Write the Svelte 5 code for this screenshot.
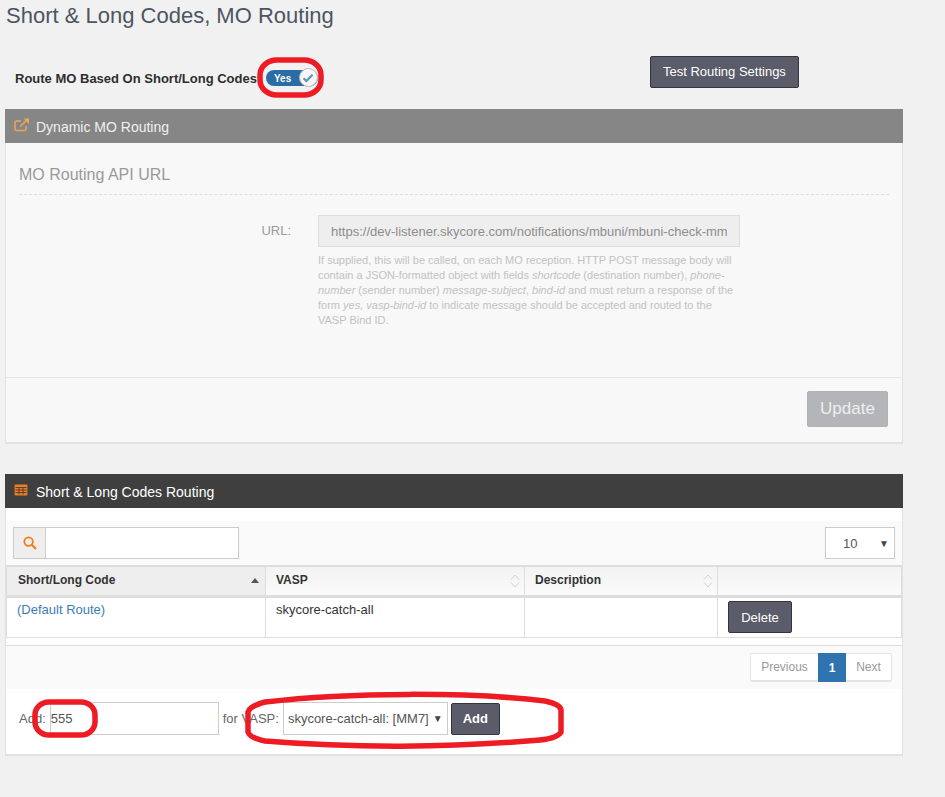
<script>
	const columns = [
		{ label: 'Short/Long Code', sort: 'asc' },
		{ label: 'VASP', sort: 'both' },
		{ label: 'Description', sort: 'both' },
		{ label: '', sort: null }
	];
</script>

<div class="page">
	<h1 class="title">Short &amp; Long Codes, MO Routing</h1>

	<div class="route-row">
		<span class="route-label">Route MO Based On Short/Long Codes</span>
		<span class="toggle">
			<span class="toggle-text">Yes</span>
			<span class="knob">
				<svg width="12" height="10" viewBox="0 0 12 10">
					<path d="M1.5 5.2 4.4 8 10.5 1.8" fill="none" stroke="#5a93b8" stroke-width="2.2" />
				</svg>
			</span>
		</span>
		<button class="btn test" type="button">Test Routing Settings</button>
	</div>

	<section class="panel dim">
		<header class="panel-head grey">
			<svg class="head-icon" width="16" height="14" viewBox="0 0 16 14">
				<path d="M12 8v3a1.6 1.6 0 0 1-1.600 1.600H2.600A1.600 1.600 0 0 1 1 11V4.600A1.600 1.600 0 0 1 2.600 3H7" fill="none" stroke="#f0a655" stroke-width="1.500" />
				<path d="M6 8.500 13 2" fill="none" stroke="#f0a655" stroke-width="1.700" />
				<path d="M9.500 0.500H15V6z" fill="#f0a655" />
			</svg>
			<span>Dynamic MO Routing</span>
		</header>
		<div class="dim-body">
			<h2 class="legend">MO Routing API URL</h2>
			<div class="url-row">
				<label class="url-label" for="url">URL:</label>
				<div class="url-field">
					<input id="url" class="url-input" disabled value="https://dev-listener.skycore.com/notifications/mbuni/mbuni-check-mm" />
					<p class="help">
						If supplied, this will be called, on each MO reception. HTTP POST message body will
						contain a JSON-formatted object with fields <i>shortcode</i> (destination number), <i>phone-number</i>
						(sender number) <i>message-subject</i>, <i>bind-id</i> and must return a response of the
						form <i>yes, vasp-bind-id</i> to indicate message should be accepted and routed to the
						VASP Bind ID.
					</p>
				</div>
			</div>
		</div>
		<footer class="dim-foot">
			<button class="update" type="button">Update</button>
		</footer>
	</section>

	<section class="panel routing">
		<header class="panel-head dark">
			<svg class="head-icon" width="14" height="12" viewBox="0 0 14 12">
				<path d="M0.600 1.600Q0.600 0.600 1.600 0.600H12.400Q13.400 0.600 13.400 1.600V10.400Q13.400 11.400 12.400 11.400H1.600Q0.600 11.400 0.600 10.400Z" fill="#f07c1e" />
				<path d="M1.500 3.500H12.500M1.500 6H12.500M1.500 8.500H12.500M5 3.500V10.500M9 3.500V10.500" stroke="#3f3f3f" stroke-width="0.900" fill="none" />
			</svg>
			<span>Short &amp; Long Codes Routing</span>
		</header>

		<div class="toolbar">
			<div class="search">
				<span class="search-icon">
					<svg width="14" height="14" viewBox="0 0 14 14">
						<circle cx="5.600" cy="5.600" r="4.300" fill="none" stroke="#f57c14" stroke-width="1.800" />
						<path d="M8.800 8.800 13 13" stroke="#f57c14" stroke-width="2.200" fill="none" />
					</svg>
				</span>
				<span class="search-input"></span>
			</div>
			<div class="length">
				<span>10</span>
				<span class="caret">▼</span>
			</div>
		</div>

		<table class="codes">
			<thead>
				<tr>
					{#each columns as col}
						<th>
							{col.label}
							{#if col.sort === 'asc'}
								<span class="sort-asc"></span>
							{:else if col.sort === 'both'}
								<svg class="sort-both" width="10" height="16" viewBox="0 0 10 16">
									<path d="M1 6.500 5 2 9 6.500M1 9.500 5 14 9 9.500" fill="none" stroke="#d0d0d0" />
								</svg>
							{/if}
						</th>
					{/each}
				</tr>
			</thead>
			<tbody>
				<tr>
					<td><a href="#default">(Default Route)</a></td>
					<td>skycore-catch-all</td>
					<td></td>
					<td><button class="btn delete" type="button">Delete</button></td>
				</tr>
			</tbody>
		</table>

		<div class="pager-bar">
			<div class="pager">
				<span class="page-link">Previous</span>
				<span class="page-link current">1</span>
				<span class="page-link">Next</span>
			</div>
		</div>

		<div class="add-row">
			<span>Add:</span>
			<span class="add-input">555</span>
			<span class="for-vasp">for VASP:</span>
			<span class="vasp-select">skycore-catch-all: [MM7]<span class="caret small">▼</span></span>
			<button class="btn add" type="button">Add</button>
		</div>
	</section>

	<svg class="marks" width="945" height="797" viewBox="0 0 945 797">
		<rect x="260" y="60" width="61" height="35" rx="17" ry="15" />
		<rect x="35" y="702" width="60" height="33" rx="14" ry="13" />
		<path d="M248 732 248 712Q250 706 265 702C350 692 470 692 545 701Q560 704 561 710L561 732Q558 738 540 740C450 748 350 748 265 741Q250 738 248 732Z" />
	</svg>
</div>

<style>
	:global(body) {
		background: #f1f1f1;
	}

	.page {
		position: relative;
		width: 945px;
		height: 797px;
		padding-left: 5px;
		box-sizing: border-box;
		overflow: hidden;
		font-family: 'Liberation Sans', Arial, sans-serif;
		font-size: 13px;
		color: #333;
	}

	.title {
		margin: 0;
		padding: 1px 0 0 1px;
		font-size: 22px;
		font-weight: 400;
		line-height: 30px;
		color: #4c5561;
	}

	.route-row {
		display: flex;
		align-items: center;
		height: 32px;
		margin-top: 25px;
		padding-left: 10px;
	}

	.route-label {
		font-size: 13px;
		font-weight: 700;
		color: #2e2e2e;
		margin-top: 12px;
	}

	.toggle {
		display: flex;
		align-items: center;
		width: 52px;
		height: 16px;
		margin: 12px 0 0 9px;
		border-radius: 9px;
		background: #2a6da6;
		position: relative;
	}

	.toggle-text {
		margin-left: 8px;
		font-size: 10px;
		font-weight: 700;
		color: #fff;
	}

	.knob {
		position: absolute;
		right: 0;
		top: -2px;
		width: 19px;
		height: 19px;
		display: flex;
		align-items: center;
		justify-content: center;
		border-radius: 50%;
		background: #f8f8f8;
		border: 1px solid #bbb;
		box-sizing: border-box;
	}

	.btn {
		border: 1px solid #32343f;
		border-radius: 2px;
		background: #5a5c69;
		color: #fff;
		font-family: inherit;
		font-size: 13px;
		padding: 0;
	}

	.test {
		width: 149px;
		height: 32px;
		margin-left: 332px;
		padding-bottom: 2px;
	}

	.panel {
		width: 898px;
		border: 1px solid #e2e2e2;
		border-top: 0;
		border-bottom-width: 2px;
		box-sizing: border-box;
	}

	.panel-head {
		display: flex;
		align-items: center;
		gap: 6px;
		height: 34px;
		margin: 0 -1px;
		padding: 1px 0 0 9px;
		box-sizing: border-box;
		font-size: 14px;
		color: #fff;
	}

	.head-icon {
		margin-top: -4px;
	}

	.grey {
		background: #868686;
		color: #f0f0f0;
	}

	.dark {
		background: #3f3f3f;
		gap: 8px;
	}

	.dim {
		margin-top: 21px;
		height: 335px;
		background: #f8f8f8;
	}

	.dim-body {
		height: 234px;
		padding: 0 13px;
		box-sizing: border-box;
	}

	.legend {
		margin: 0;
		padding: 22px 0 9px;
		height: 52px;
		box-sizing: border-box;
		border-bottom: 1px dashed #ddd;
		font-size: 16px;
		font-weight: 400;
		line-height: 20px;
		color: #9a9a9a;
	}

	.url-row {
		display: flex;
		margin-top: 20px;
	}

	.url-label {
		width: 272px;
		padding-top: 8px;
		text-align: right;
		font-size: 13px;
		color: #9a9a9a;
	}

	.url-field {
		margin-left: 27px;
		width: 422px;
	}

	.url-input {
		display: block;
		width: 100%;
		height: 32px;
		padding: 0 12px;
		box-sizing: border-box;
		border: 1px solid #ddd;
		background: #eee;
		font-family: inherit;
		font-size: 13px;
		color: #8d8d8d;
	}

	.help {
		margin: 6px 0 0;
		width: 422px;
		font-size: 11px;
		line-height: 15px;
		color: #c2c2c2;
	}

	.dim-foot {
		height: 65px;
		display: flex;
		justify-content: flex-end;
		align-items: flex-start;
		padding: 13px 14px 0 0;
		box-sizing: border-box;
		border-top: 1px solid #e6e6e6;
	}

	.update {
		width: 81px;
		height: 36px;
		padding: 0;
		border: 1px solid #b0b0b5;
		border-radius: 2px;
		background: #b4b5b9;
		color: #eee;
		font-family: inherit;
		font-size: 17px;
	}

	.routing {
		margin-top: 30px;
		height: 282px;
		background: #fff;
	}

	.toolbar {
		display: flex;
		justify-content: space-between;
		margin-top: 13px;
		height: 44px;
		padding: 6px 7px 0;
		box-sizing: border-box;
		background: #fafafa;
	}

	.search {
		display: flex;
		width: 226px;
		height: 32px;
		margin-left: 0;
		border: 1px solid #ccc;
		box-sizing: border-box;
		background: #fff;
	}

	.search-icon {
		display: flex;
		align-items: center;
		justify-content: center;
		width: 31px;
		background: #eee;
		border-right: 1px solid #ccc;
	}

	.search-input {
		flex: 1;
	}

	.length {
		display: flex;
		align-items: center;
		justify-content: space-between;
		width: 70px;
		height: 32px;
		padding: 0 5px 0 17px;
		box-sizing: border-box;
		border: 1px solid #ccc;
		background: #fff;
		font-size: 13px;
		color: #555;
	}

	.caret {
		font-size: 10px;
		color: #444;
	}

	.caret.small {
		margin-left: 4px;
	}

	.codes {
		width: 896px;
		border-collapse: collapse;
		table-layout: fixed;
		background: #fff;
	}

	.codes th,
	.codes td {
		padding: 0 10px;
		border: 1px solid #ddd;
		text-align: left;
		font-size: 13px;
		color: #333;
	}

	.codes th {
		position: relative;
		height: 26px;
		padding-bottom: 2px;
		border-width: 2px 1px 3px;
		background: linear-gradient(#f3f3f3, #fafafa);
		font-size: 12px;
		font-weight: 700;
	}

	.codes th:first-child {
		width: 237px;
		padding-left: 11px;
		background: #eee;
	}

	.codes th:nth-child(2) {
		width: 238px;
	}

	.codes th:nth-child(3) {
		width: 172px;
	}

	.codes td {
		height: 41px;
		vertical-align: top;
		padding-top: 4px;
		padding-bottom: 0;
		box-sizing: border-box;
	}

	.codes a {
		color: #3b7cb8;
		text-decoration: none;
	}

	.sort-asc {
		position: absolute;
		right: 6px;
		top: 11px;
		border: 4.500px solid transparent;
		border-top: 0;
		border-bottom: 5px solid #555;
	}

	.sort-both {
		position: absolute;
		right: 4px;
		top: 6px;
	}

	.delete {
		width: 64px;
		height: 32px;
		margin: -1px 0 0 0;
		display: block;
	}

	.pager-bar {
		display: flex;
		justify-content: flex-end;
		margin-top: 7px;
		height: 44px;
		padding: 7px 10px 0 0;
		box-sizing: border-box;
		border-top: 1px solid #ddd;
		background: #fafafa;
	}

	.pager {
		display: flex;
		height: 29px;
		border: 1px solid #e4e4e4;
		border-bottom-width: 2px;
		border-radius: 2px;
		box-sizing: border-box;
		background: #fff;
	}

	.page-link {
		display: flex;
		align-items: center;
		justify-content: center;
		width: 45px;
		color: #999;
		font-size: 12px;
	}

	.page-link:first-child {
		width: 67px;
	}

	.current {
		width: 28px;
		margin: -1px 0 -2px;
		background: #2f74b0;
		color: #fff;
		font-weight: 700;
	}

	.add-row {
		display: flex;
		align-items: center;
		height: 33px;
		margin-top: 13px;
		padding-left: 13px;
		font-size: 13px;
		color: #666;
	}

	.add-input {
		display: flex;
		align-items: center;
		width: 169px;
		height: 33px;
		margin-left: 4px;
		padding-left: 0;
		box-sizing: border-box;
		border: 1px solid #ccc;
		background: #fff;
		color: #555;
	}

	.for-vasp {
		margin-left: 4px;
	}

	.vasp-select {
		display: flex;
		align-items: center;
		width: 165px;
		height: 33px;
		margin-left: 4px;
		padding-left: 4px;
		box-sizing: border-box;
		border: 1px solid #ccc;
		background: #fff;
		color: #555;
		white-space: nowrap;
	}

	.add {
		width: 49px;
		height: 32px;
		margin-left: 3px;
		font-weight: 700;
	}

	.marks {
		position: absolute;
		left: 0;
		top: 0;
		pointer-events: none;
	}

	.marks rect,
	.marks path {
		fill: none;
		stroke: #ed1c24;
		stroke-width: 5.500;
	}
</style>
